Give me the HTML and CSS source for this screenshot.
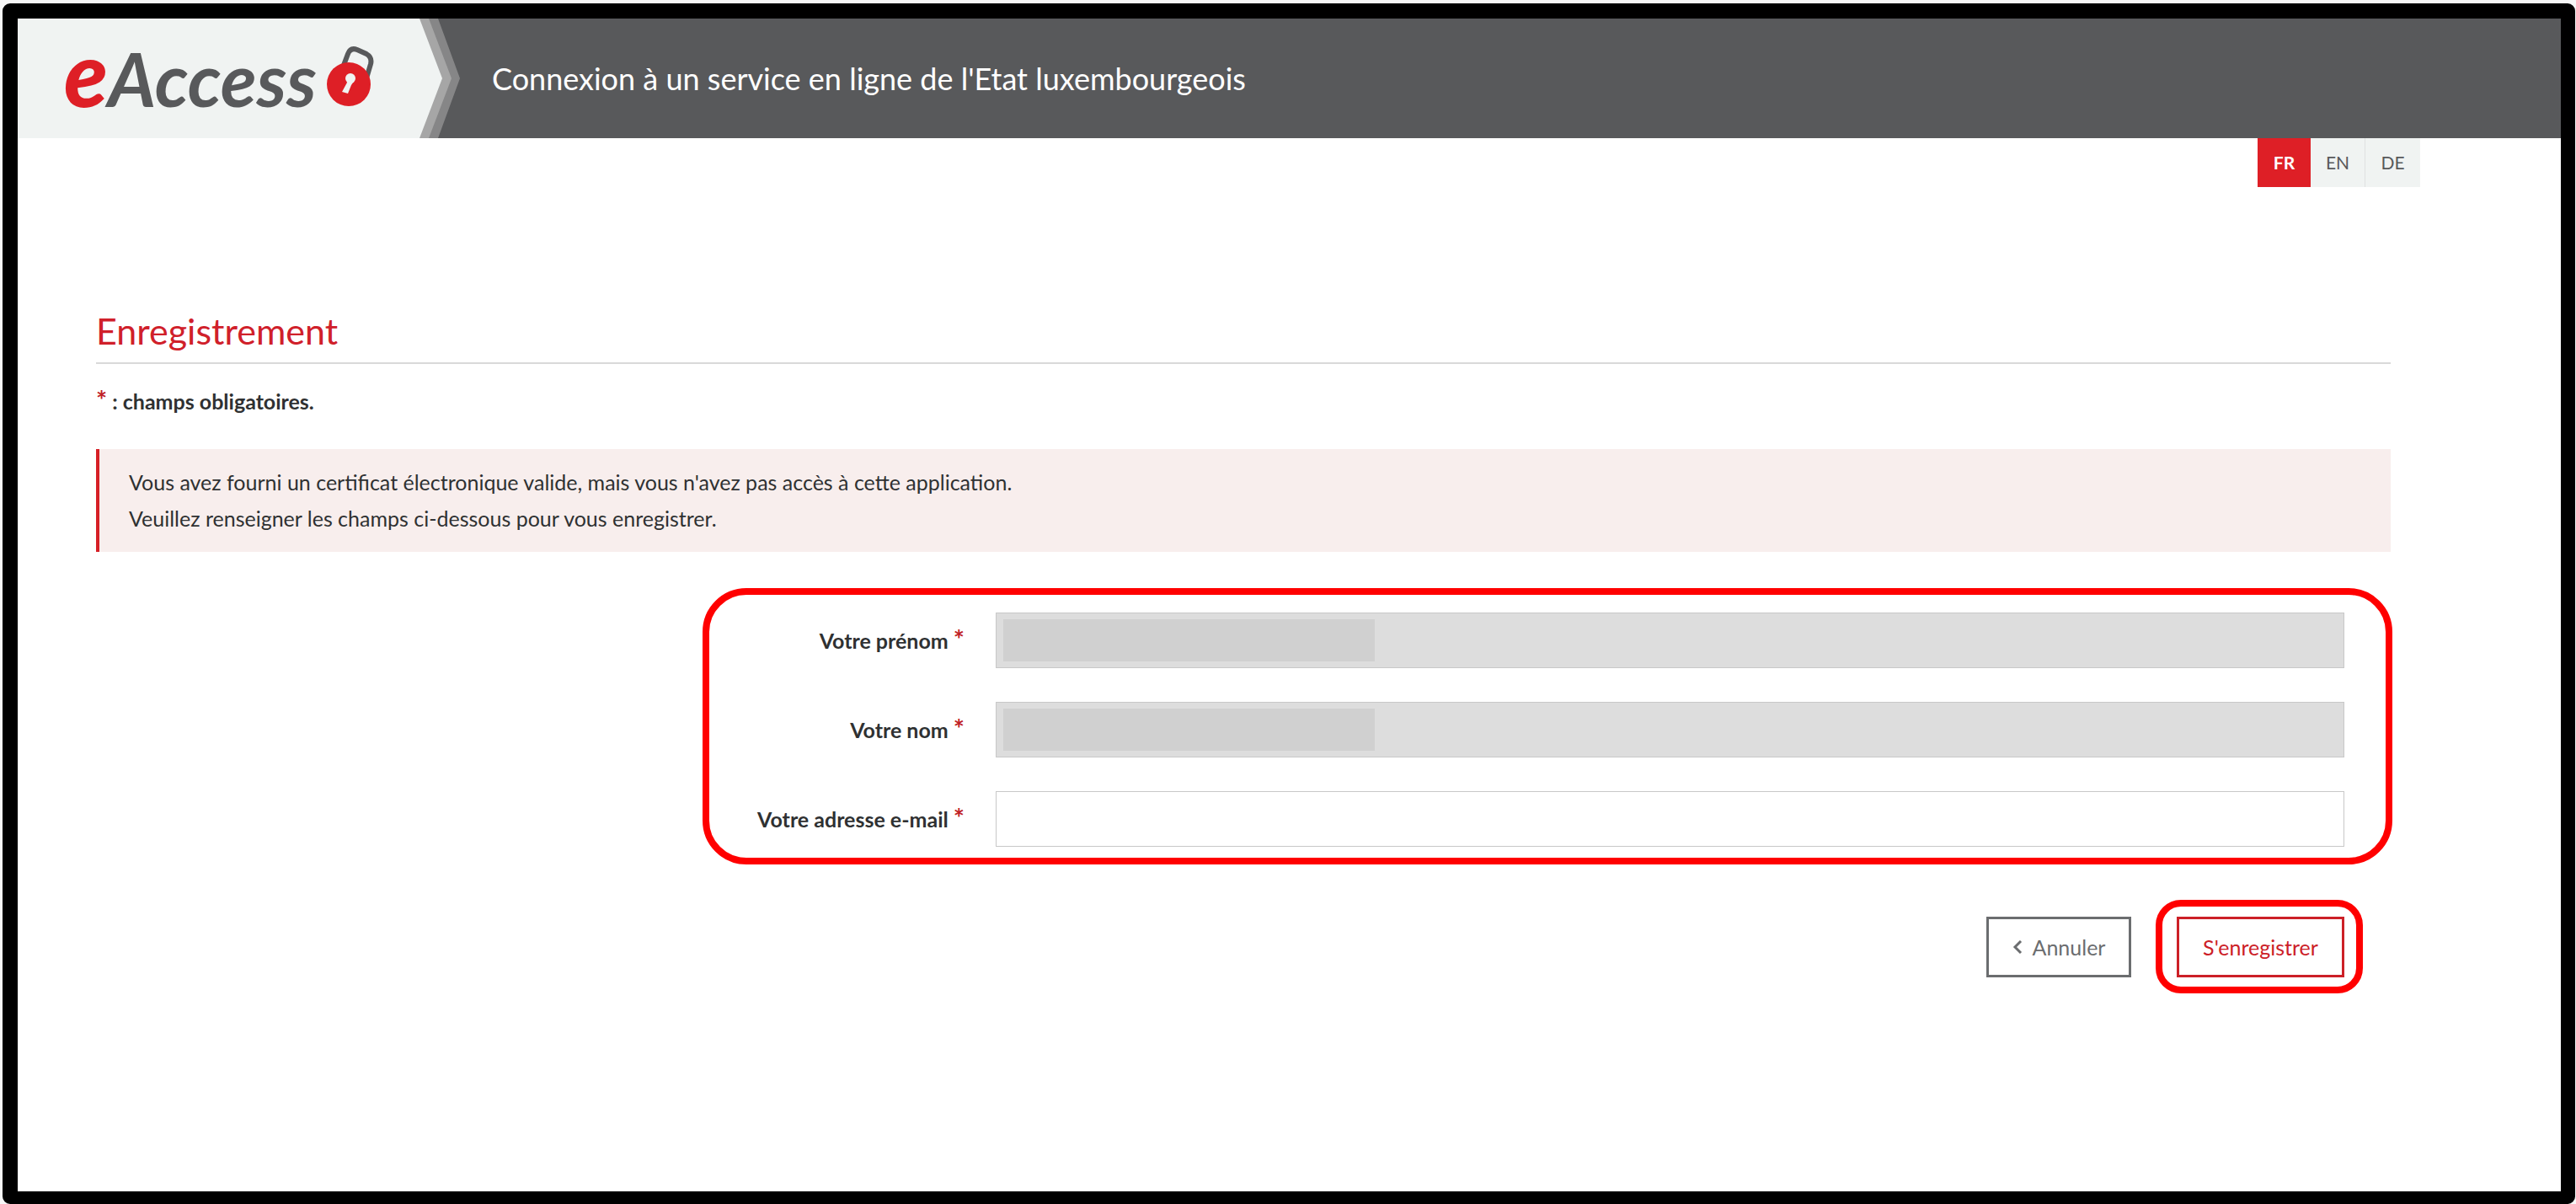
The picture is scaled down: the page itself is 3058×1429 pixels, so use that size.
FILE: index.html
```html
<!DOCTYPE html>
<html lang="fr">
<head>
<meta charset="utf-8">
<meta name="viewport" content="width=device-width, initial-scale=1">
<title>eAccess - Enregistrement</title>
<link rel="stylesheet" href="styles.css">
</head>
<body>
<div class="frame">
  <header class="header">
    <a class="brand" href="#" aria-label="eAccess">
      <span class="brand-e">e</span><span class="brand-name">Access</span>
      <svg class="brand-lock" viewBox="0 0 56 72" aria-hidden="true">
        <path d="M19 25 L25 9 Q28 1 36 4 L47 9 Q54 13 52 21 L47 38" fill="none" stroke="#58595b" stroke-width="6"/>
        <ellipse cx="26" cy="45" rx="26" ry="26" fill="#de1f26"/>
        <circle cx="28" cy="38" r="6" fill="#f0f3f2"/>
        <path d="M25 40 L31 43 L29 46 L25 56 L18 54 L24 43 Z" fill="#f0f3f2"/>
      </svg>
    </a>
    <svg class="chevron" viewBox="0 0 48 142" preserveAspectRatio="none" aria-hidden="true">
      <path d="M0 0 H48 V142 H0 L27 71 Z" fill="#a6a6a6"/>
      <path d="M11 0 H48 V142 H11 L38 71 Z" fill="#868687"/>
      <path d="M22 0 H49 V142 H22 L48 71 Z" fill="#58595b"/>
    </svg>
    <p class="tagline">Connexion à un service en ligne de l'Etat luxembourgeois</p>
  </header>
  <nav class="languages" aria-label="Langue">
    <a class="language language-active" href="#">FR</a>
    <a class="language" href="#">EN</a>
    <a class="language" href="#">DE</a>
  </nav>
  <main class="main">
    <h1 class="title">Enregistrement</h1>
    <p class="required-note"><span class="star">*</span> : champs obligatoires.</p>
    <div class="alert">
      <p>Vous avez fourni un certificat électronique valide, mais vous n'avez pas accès à cette application.</p>
      <p>Veuillez renseigner les champs ci-dessous pour vous enregistrer.</p>
    </div>
    <form class="form">
      <div class="fields">
        <label class="label" for="first-name">Votre prénom <span class="star">*</span></label>
        <div class="control"><input class="input" id="first-name" type="text" disabled><span class="mask"></span></div>
        <label class="label" for="last-name">Votre nom <span class="star">*</span></label>
        <div class="control"><input class="input" id="last-name" type="text" disabled><span class="mask"></span></div>
        <label class="label" for="email">Votre adresse e-mail <span class="star">*</span></label>
        <div class="control"><input class="input" id="email" type="email"></div>
      </div>
      <div class="actions">
        <button class="button button-cancel" type="button">
          <svg class="back" viewBox="0 0 12 16" aria-hidden="true"><path d="M10 1 L3 8 L10 15" fill="none" stroke="currentColor" stroke-width="3"/></svg>
          Annuler
        </button>
        <div class="highlight"><button class="button button-submit" type="submit">S'enregistrer</button></div>
      </div>
    </form>
  </main>
</div>
</body>
</html>
```
FILE: styles.css
```css
* { box-sizing: border-box; }

body {
  margin: 0;
  padding: 4px 1px 0 3px;
  background: #f6f6f6;
  color: #2f3132;
  font-family: Lato, sans-serif;
  font-size: 25px;
  line-height: 43px;
}

p, h1 { margin: 0; }

.frame {
  min-height: calc(100vh - 4px);
  border: 18px solid #000;
  border-right-width: 17px;
  border-bottom-width: 15px;
  border-radius: 9px;
  background: #fff;
}

.header {
  display: flex;
  align-items: stretch;
  height: 142px;
  background: #58595b;
}

.brand {
  display: flex;
  align-items: baseline;
  width: 477px;
  padding: 0 54px 0 55px;
  background: #f0f3f2;
  color: #58595b;
  font-style: italic;
  font-weight: 700;
  line-height: 128px;
  text-decoration: none;
}

.brand-e {
  color: #de1f26;
  font-size: 106px;
  font-weight: 900;
}

.brand-name { font-size: 88px; }

.brand-lock {
  width: 56px;
  height: 72px;
  margin-left: auto;
}

.chevron {
  width: 48px;
  height: 142px;
  background: #f0f3f2;
}

.tagline {
  margin-left: 38px;
  color: #fff;
  font-size: 36px;
  line-height: 142px;
}

.languages {
  display: flex;
  justify-content: flex-end;
  padding-right: 167px;
}

.language {
  width: 65px;
  height: 58px;
  border-right: 1px solid #dfe1e1;
  background: #f0f3f2;
  color: #58595b;
  font-size: 21px;
  line-height: 58px;
  text-align: center;
  text-decoration: none;
}

.language:last-child { border-right: 0; }

.language-active {
  width: 63px;
  border: 0;
  background: #de1f26;
  color: #fff;
  font-weight: 700;
}

.main { padding: 142px 202px 0 93px; }

.title {
  padding-bottom: 8px;
  border-bottom: 2px solid #d9d9d9;
  color: #d0202a;
  font-size: 43px;
  font-weight: 400;
  line-height: 58px;
}

.required-note {
  margin-top: 23px;
  font-weight: 700;
}

.star {
  color: #c01f26;
  font-size: 31px;
  line-height: 1;
}

.alert {
  margin-top: 35px;
  padding: 18px 35px;
  border-left: 4px solid #d61f26;
  background: #f8eeed;
}

.fields {
  display: grid;
  grid-template-columns: 303px 1fr;
  column-gap: 37px;
  row-gap: 40px;
  align-items: center;
  margin: 43px -2px 0 720px;
  padding: 21px 49px 13px 0;
  border: 8px solid #f00;
  border-radius: 52px;
}

.label {
  font-weight: 700;
  text-align: right;
}

.control {
  position: relative;
  display: flex;
}

.input {
  flex: 1;
  height: 66px;
  padding: 0 16px;
  border: 1px solid #c8c8c8;
  border-radius: 0;
  background: #fff;
  font: inherit;
}

.input:disabled { background: #ddd; }

.mask {
  position: absolute;
  top: 8px;
  left: 9px;
  width: 441px;
  height: 50px;
  background: #d0d0d0;
}

.actions {
  display: flex;
  justify-content: flex-end;
  align-items: center;
  gap: 29px;
  margin-top: 42px;
  padding-right: 33px;
}

.highlight {
  display: flex;
  padding: 12px 14px 11px 17px;
  border: 8px solid #f00;
  border-radius: 30px;
}

.button {
  display: flex;
  justify-content: center;
  align-items: center;
  gap: 12px;
  height: 72px;
  border: 3px solid;
  background: #fff;
  font-family: inherit;
  font-size: 25px;
}

.button-cancel {
  width: 172px;
  color: #6b6d6f;
}

.button-submit {
  width: 199px;
  color: #cc2027;
}

.back {
  width: 12px;
  height: 16px;
}
```
